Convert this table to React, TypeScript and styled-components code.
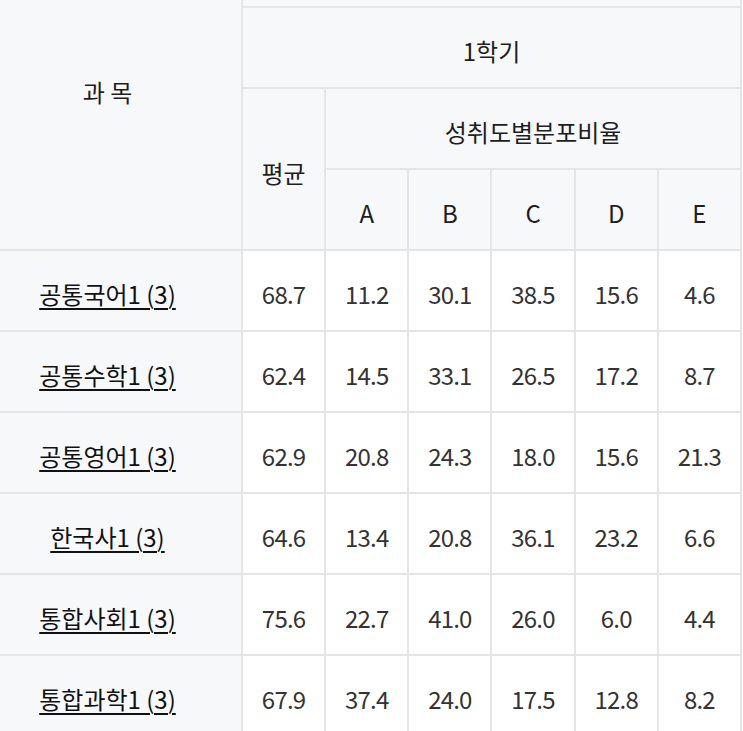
import React from "react";
import styled, { createGlobalStyle } from "styled-components";

const GlobalStyle = createGlobalStyle`
  html, body { margin: 0; padding: 0; background: #ffffff; }
  body { font-family: "Noto Sans CJK KR", "Noto Sans", sans-serif; overflow: hidden; }
`;

const Page = styled.div`
  width: 743px;
  height: 731px;
  overflow: hidden;
`;

const Table = styled.table`
  width: 770px;
  margin: -75px 0 0 -28px;
  border-collapse: collapse;
  table-layout: fixed;
  font-family: "Noto Sans CJK KR", "Noto Sans", sans-serif;
  font-size: 24px;
`;

const HeadCell = styled.th`
  height: 72px;
  padding: 7px 0 0 0;
  background: #f7f8fa;
  border: 2px solid #e4e5e7;
  color: #1e1e1e;
  font-weight: 400;
  text-align: center;
  vertical-align: middle;
  line-height: 1.4;
`;

const SubjectCell = styled.th`
  height: 72px;
  padding: 7px 0 0 0;
  background: #f7f8fa;
  border: 2px solid #e4e5e7;
  font-weight: 400;
  text-align: center;
  vertical-align: middle;
  line-height: 1.4;
`;

const SubjectLink = styled.a`
  color: #111111;
  text-decoration: underline;
  text-decoration-thickness: 2px;
  text-underline-offset: 4px;
`;

const DataCell = styled.td`
  height: 72px;
  padding: 7px 0 0 0;
  background: #ffffff;
  border: 2px solid #e4e5e7;
  color: #333333;
  text-align: center;
  vertical-align: middle;
  line-height: 1.4;
  letter-spacing: -0.8px;
`;

const rows: [string, string[]][] = [
  ["공통국어1 (3)", ["68.7", "11.2", "30.1", "38.5", "15.6", "4.6"]],
  ["공통수학1 (3)", ["62.4", "14.5", "33.1", "26.5", "17.2", "8.7"]],
  ["공통영어1 (3)", ["62.9", "20.8", "24.3", "18.0", "15.6", "21.3"]],
  ["한국사1 (3)", ["64.6", "13.4", "20.8", "36.1", "23.2", "6.6"]],
  ["통합사회1 (3)", ["75.6", "22.7", "41.0", "26.0", "6.0", "4.4"]],
  ["통합과학1 (3)", ["67.9", "37.4", "24.0", "17.5", "12.8", "8.2"]],
];

export default function App() {
  return (
    <Page>
      <GlobalStyle />
      <Table>
        <colgroup>
          <col style={{ width: 269 }} />
          <col />
          <col />
          <col />
          <col />
          <col />
          <col />
        </colgroup>
        <thead>
          <tr>
            <HeadCell rowSpan={4}>과 목</HeadCell>
            <HeadCell colSpan={6}>1학년</HeadCell>
          </tr>
          <tr>
            <HeadCell colSpan={6}>1학기</HeadCell>
          </tr>
          <tr>
            <HeadCell rowSpan={2}>평균</HeadCell>
            <HeadCell colSpan={5}>성취도별분포비율</HeadCell>
          </tr>
          <tr>
            {["A", "B", "C", "D", "E"].map((g) => (
              <HeadCell key={g}>{g}</HeadCell>
            ))}
          </tr>
        </thead>
        <tbody>
          {rows.map(([name, vals]) => (
            <tr key={name}>
              <SubjectCell>
                <SubjectLink href="#">{name}</SubjectLink>
              </SubjectCell>
              {vals.map((v, i) => (
                <DataCell key={i}>{v}</DataCell>
              ))}
            </tr>
          ))}
        </tbody>
      </Table>
    </Page>
  );
}
